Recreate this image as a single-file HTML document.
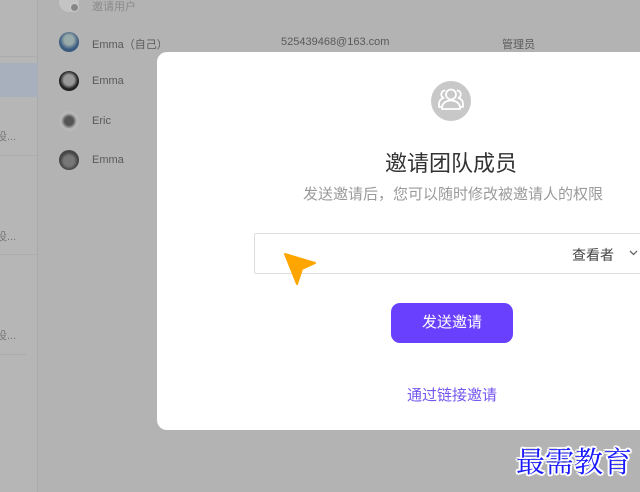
<!DOCTYPE html>
<html><head><meta charset="utf-8"><style>
*{margin:0;padding:0;box-sizing:border-box}
body{width:640px;height:492px;overflow:hidden;background:#b3b3b3;font-family:"Liberation Sans","Noto Sans CJK SC",sans-serif;position:relative}
.side{position:absolute;left:0;top:0;width:38px;height:492px;background:#b6b6b6;border-right:1px solid #aaa}
.hl{position:absolute;left:0;top:63px;width:38px;height:34px;background:#a9b0bd}
.line{position:absolute;left:0;width:38px;height:1px;background:#acacac}
.st{position:absolute;left:-4px;font-size:11px;color:#777}
.av{position:absolute;left:59px;width:20px;height:20px;border-radius:50%}
.nm{position:absolute;left:92px;font-size:11px;color:#5a5a5a}
.modal{position:absolute;left:157px;top:52px;width:500px;height:378px;background:#fff;border-radius:10px}
.abs{position:absolute}
</style></head><body>
<div class="side"></div>
<div class="hl"></div>
<div class="line" style="top:56px"></div>
<div class="line" style="top:155px"></div>
<div class="line" style="top:254px"></div>
<div class="line" style="top:354px;width:26px"></div>
<div class="st" style="top:128px">设...</div>
<div class="st" style="top:228px">设...</div>
<div class="st" style="top:327px">设...</div>

<div class="av" style="top:-8px;background:#c4c4c4"></div>
<div class="abs" style="left:70px;top:3px;width:9px;height:9px;border-radius:50%;background:#888;border:1px solid #ccc"></div>
<div class="nm" style="top:-2px;color:#8a8a8a">邀请用户</div>

<div class="av" style="top:32px;background:radial-gradient(circle at 50% 40%,#9aa 0 30%,#3a5a80 60%)"></div>
<div class="nm" style="top:36px">Emma（自己）</div>
<div class="abs" style="left:281px;top:36px;font-size:11px;color:#5a5a5a">525439468@163.com</div>
<div class="abs" style="left:502px;top:36px;font-size:11px;color:#5a5a5a">管理员</div>

<div class="av" style="top:71px;background:radial-gradient(circle at 50% 45%,#999 0 35%,#222 60%)"></div>
<div class="nm" style="top:75px">Emma</div>
<div class="av" style="top:111px;background:radial-gradient(circle at 50% 50%,#555 0 30%,#b8b8b8 55%)"></div>
<div class="nm" style="top:115px">Eric</div>
<div class="av" style="top:150px;background:radial-gradient(circle at 50% 55%,#777 0 35%,#444 60%)"></div>
<div class="nm" style="top:154px">Emma</div>

<div class="modal"></div>
<svg class="abs" style="left:431px;top:81px" width="40" height="40" viewBox="0 0 40 40">
<circle cx="20" cy="20" r="20" fill="#c8c8c8"/>
<g fill="none" stroke="#fff" stroke-width="1.8" stroke-linecap="round" stroke-linejoin="round">
<circle cx="20" cy="13.5" r="5"/>
<path d="M11 28v-1.5c0-4 4-7 9-7s9 3 9 7V28z"/>
<path d="M13.5 9.5a4 4 0 0 0-1 7.5C9.5 18 8 20 8 23v3h2.5"/>
<path d="M26.5 9.5a4 4 0 0 1 1 7.5c3 1 4.5 3 4.5 6v3h-2.5"/>
</g></svg>
<div class="abs" style="left:385px;top:146px;font-size:22px;color:#333;white-space:nowrap">邀请团队成员</div>
<div class="abs" style="left:303px;top:183px;font-size:15px;color:#9a9a9a;white-space:nowrap">发送邀请后，您可以随时修改被邀请人的权限</div>
<div class="abs" style="left:254px;top:233px;width:400px;height:41px;border:1px solid #ddd;border-radius:2px"></div>
<div class="abs" style="left:572px;top:245px;font-size:14px;color:#444">查看者</div>
<svg class="abs" style="left:629px;top:250px" width="9" height="6" viewBox="0 0 9 6"><path d="M1 1l3.5 3.5L8 1" fill="none" stroke="#666" stroke-width="1.3"/></svg>
<svg class="abs" style="left:282px;top:251px" width="34" height="34" viewBox="0 0 34 34"><path d="M3 3L33 12L20 18L15 33Z" fill="#ffa500" stroke="#ffa500" stroke-width="2" stroke-linejoin="round"/></svg>
<div class="abs" style="left:391px;top:303px;width:122px;height:40px;border-radius:9px;background:#6a40ff;color:#fff;font-size:15px;text-align:center;line-height:40px">发送邀请</div>
<div class="abs" style="left:391px;top:384px;width:122px;text-align:center;font-size:15px;color:#7456f0">通过链接邀请</div>
<div class="abs" style="left:516px;top:440px;font-size:29px;font-family:'Liberation Serif','Noto Serif CJK SC',serif;color:#1a1aff;white-space:nowrap;text-shadow:-2px 0 #fff,2px 0 #fff,0 -2px #fff,0 2px #fff,1.5px 1.5px #fff,-1.5px -1.5px #fff,1.5px -1.5px #fff,-1.5px 1.5px #fff">最需教育</div>
</body></html>
